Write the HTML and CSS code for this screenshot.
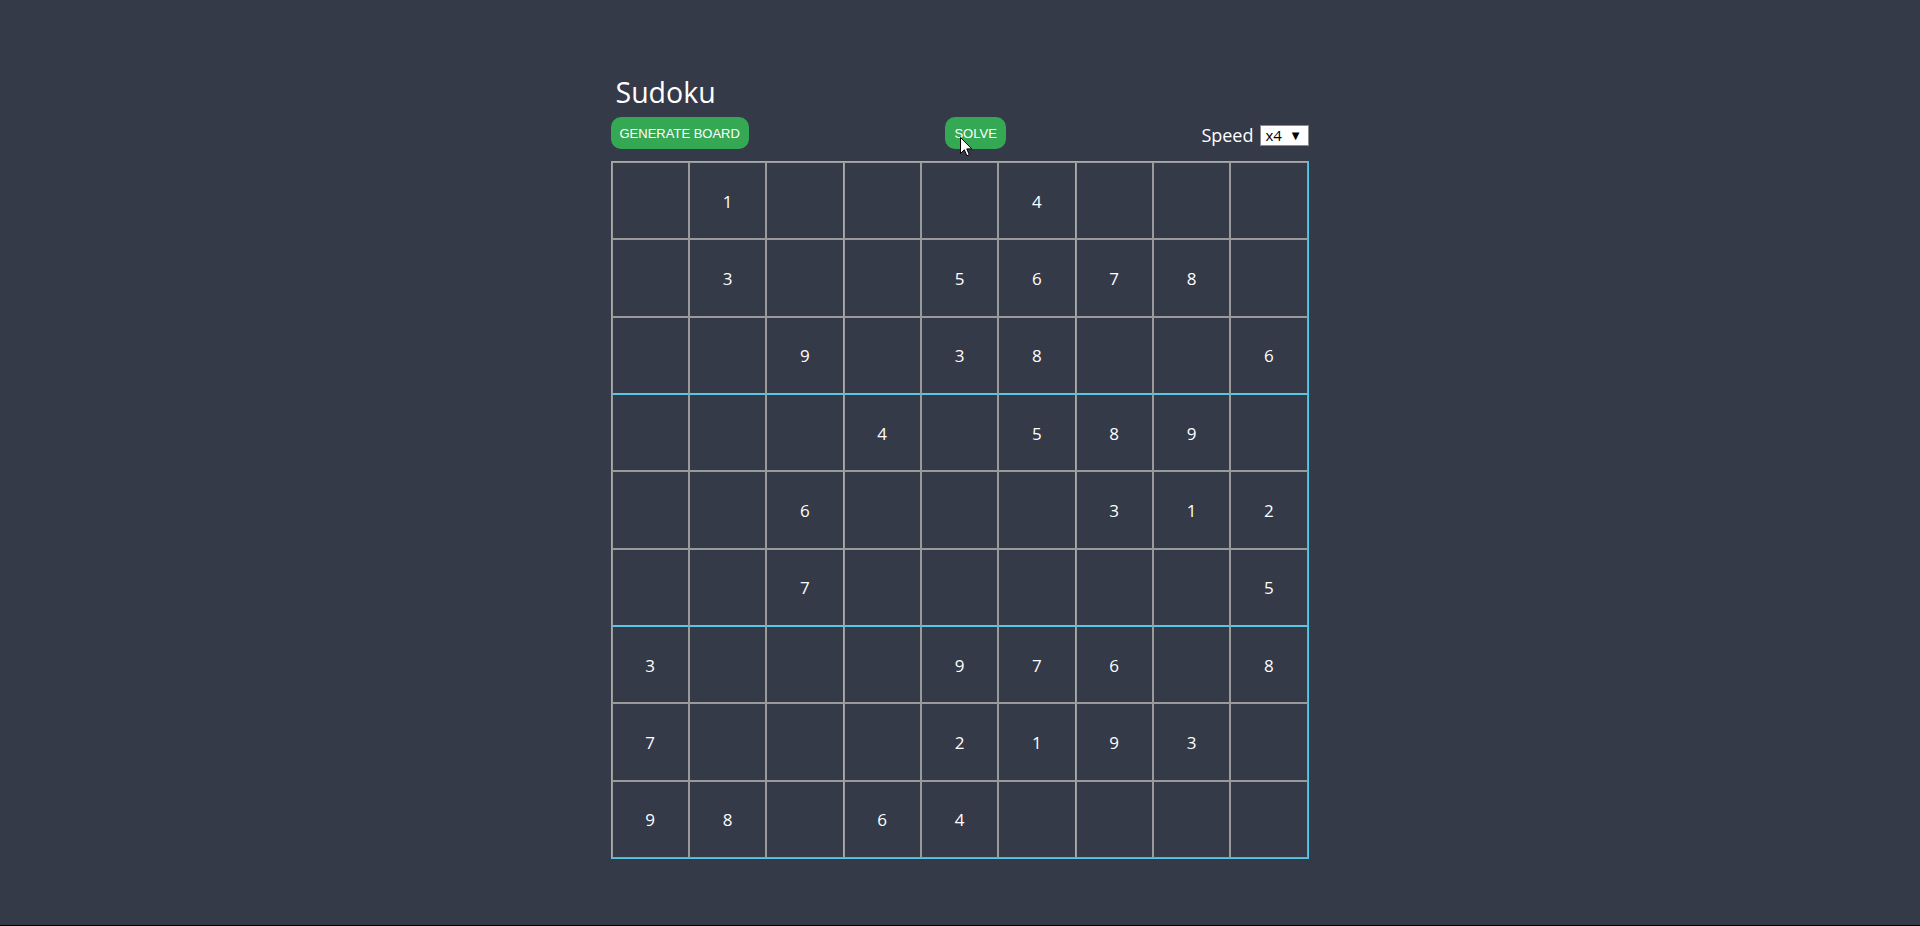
FILE: index.html
```html
<!DOCTYPE html>
<html lang="en">
<head>
<meta charset="utf-8">
<title>Sudoku</title>
<link rel="stylesheet" href="styles.css">
</head>
<body>
<div class="page">
  <main class="app">
    <h1 class="title">Sudoku</h1>
    <div class="toolbar">
      <button class="btn">GENERATE BOARD</button>
      <button class="btn btn-solve">SOLVE
        <svg class="cursor" width="13" height="20" viewBox="0 0 13 20"><path d="M0.5 0.5 L0.5 16.5 L4.3 12.8 L6.9 18.8 L9.3 17.8 L6.8 11.9 L11.8 11.9 Z" fill="#fff" stroke="#000" stroke-width="1" stroke-linejoin="round"/></svg>
      </button>
      <div class="speed">
        <span class="speed-label">Speed</span>
        <span class="select"><span class="select-value">x4</span><span class="select-arrow">▼</span></span>
      </div>
    </div>
    <div class="board">
      <div class="cell"></div><div class="cell">1</div><div class="cell bx"></div><div class="cell"></div><div class="cell"></div><div class="cell bx">4</div><div class="cell"></div><div class="cell"></div><div class="cell"></div>
      <div class="cell"></div><div class="cell">3</div><div class="cell bx"></div><div class="cell"></div><div class="cell">5</div><div class="cell bx">6</div><div class="cell">7</div><div class="cell">8</div><div class="cell"></div>
      <div class="cell by"></div><div class="cell by"></div><div class="cell bx by">9</div><div class="cell by"></div><div class="cell by">3</div><div class="cell bx by">8</div><div class="cell by"></div><div class="cell by"></div><div class="cell by">6</div>
      <div class="cell ty"></div><div class="cell ty"></div><div class="cell bx ty"></div><div class="cell ty">4</div><div class="cell ty"></div><div class="cell bx ty">5</div><div class="cell ty">8</div><div class="cell ty">9</div><div class="cell ty"></div>
      <div class="cell"></div><div class="cell"></div><div class="cell bx">6</div><div class="cell"></div><div class="cell"></div><div class="cell bx"></div><div class="cell">3</div><div class="cell">1</div><div class="cell">2</div>
      <div class="cell by"></div><div class="cell by"></div><div class="cell bx by">7</div><div class="cell by"></div><div class="cell by"></div><div class="cell bx by"></div><div class="cell by"></div><div class="cell by"></div><div class="cell by">5</div>
      <div class="cell ty">3</div><div class="cell ty"></div><div class="cell bx ty"></div><div class="cell ty"></div><div class="cell ty">9</div><div class="cell bx ty">7</div><div class="cell ty">6</div><div class="cell ty"></div><div class="cell ty">8</div>
      <div class="cell">7</div><div class="cell"></div><div class="cell bx"></div><div class="cell"></div><div class="cell">2</div><div class="cell bx">1</div><div class="cell">9</div><div class="cell">3</div><div class="cell"></div>
      <div class="cell">9</div><div class="cell">8</div><div class="cell bx"></div><div class="cell">6</div><div class="cell">4</div><div class="cell bx"></div><div class="cell"></div><div class="cell"></div><div class="cell"></div>
    </div>
  </main>
</div>
</body>
</html>
```
FILE: styles.css
```css
html {
  background: #000;
}
body {
  margin: 0;
  font-family: "Open Sans", "Noto Sans", sans-serif;
  color: #fff;
}
.page {
  background: #343a48;
  height: 925px;
  overflow: hidden;
}
.app {
  width: 698px;
  margin: 0 auto;
  padding-top: 73px;
  position: relative;
  left: -0.5px;
}
.title {
  margin: 0;
  padding-left: 5px;
  font-size: 28.5px;
  font-weight: 400;
  line-height: 38px;
}
.toolbar {
  margin-top: 6px;
  display: flex;
  justify-content: space-between;
  align-items: center;
  height: 32px;
}
.btn {
  position: relative;
  height: 32px;
  padding: 0 9px;
  border: none;
  border-radius: 10px;
  background: #34a853;
  color: #fff;
  font-family: "Liberation Sans", Arial, sans-serif;
  font-size: 13px;
  line-height: 15px;
  cursor: pointer;
}
.btn-solve {
  margin-left: 1px;
}
.cursor {
  position: absolute;
  left: 15px;
  top: 20px;
}
.speed {
  display: flex;
  align-items: center;
  gap: 6px;
  margin-top: 4px;
}
.speed-label {
  font-size: 18px;
  line-height: 22px;
}
.select {
  position: relative;
  display: block;
  width: 49px;
  height: 21px;
  box-sizing: border-box;
  border: 1px solid #8a8a8a;
  background: #fff;
  color: #000;
}
.select-value {
  position: absolute;
  left: 5px;
  top: -1px;
  font-size: 15px;
  line-height: 21px;
}
.select-arrow {
  position: absolute;
  right: 8px;
  top: 1px;
  font-family: "DejaVu Sans", sans-serif;
  font-size: 10px;
  line-height: 17px;
}
.board {
  margin-top: 12px;
  display: grid;
  grid-template-columns: repeat(9, 1fr);
  grid-auto-rows: 77.33px;
  border: 1px solid #5bc6e4;
  width: 696px;
}
.cell {
  border: 1px solid #9a9a9a;
  display: flex;
  align-items: center;
  justify-content: center;
  font-size: 17px;
  padding-top: 1px;
  box-sizing: border-box;
}
.cell.bx {
  border-right-color: #5bc6e4;
}
.cell.by {
  border-bottom-color: #5bc6e4;
}
.cell.ty {
  border-top-color: #5bc6e4;
}
```
